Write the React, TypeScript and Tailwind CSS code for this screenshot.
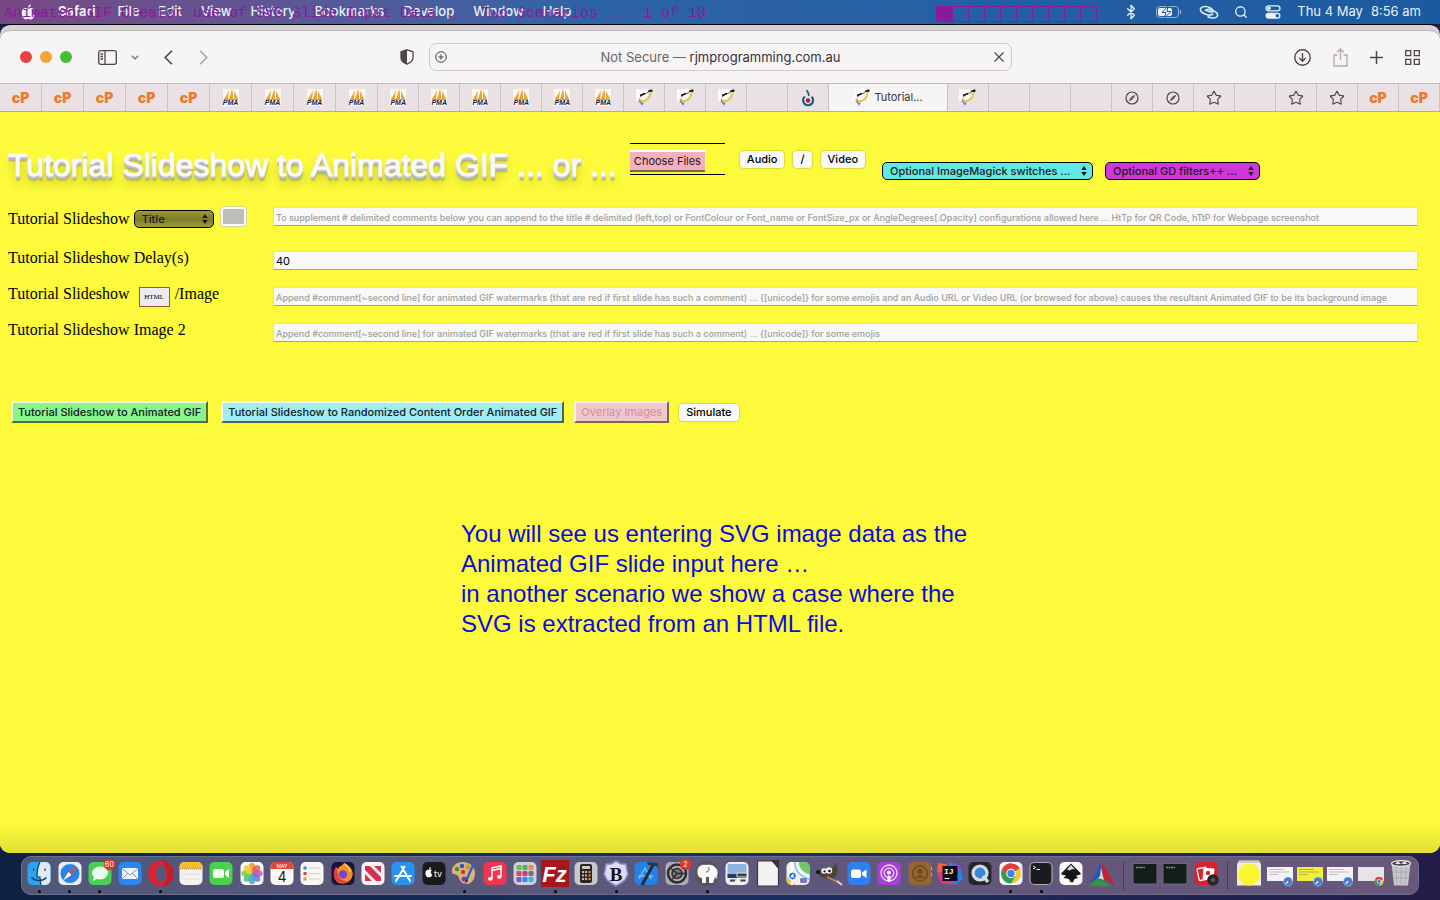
import { FC, ReactNode } from 'react'
import { Bluetooth, Search, Star } from 'lucide-react'

const menus = ['File', 'Edit', 'View', 'History', 'Bookmarks', 'Develop', 'Window', 'Help']

const leftTabs = [
  'cp', 'cp', 'cp', 'cp', 'cp', 'pma', 'pma', 'pma', 'pma', 'pma',
  'pma', 'pma', 'pma', 'pma', 'pma', 'goat', 'goat', 'goat', '', 'drop',
]
const rightTabs = ['goat', '', '', '', 'compass', 'compass', 'star', '', 'star', 'star', 'cp', 'cp']

const watermark = 'Append #comment[~second line] for animated GIF watermarks (that are red if first slide has such a comment) ... {[unicode]} for some emojis'

const GoatIcon = () => (
  <svg viewBox="0 0 17 17" className="size-[17px]">
    <path d="M0 0h12v7L7 12H0z" fill="#fcfafa" />
    <path d="M14.500 3c0 4-2 7-5 8.500-3 1.500-5 1-6.500-2" stroke="#e3c53a" strokeWidth="1.800" fill="none" />
    <path d="M4 8l4-3 4-1.500" stroke="#6d6468" strokeWidth="1" fill="none" />
    <path d="M4 6.500l5-2M12 2.500l3-1" stroke="#1b1616" strokeWidth="1.600" />
    <path d="M3 11.500l3 4 1-2" stroke="#8b6fc4" strokeWidth="1.300" fill="none" />
    <circle cx="15.300" cy="1.700" r="1.300" fill="#1b1616" />
  </svg>
)

const TabIcon: FC<{ kind: string }> = ({ kind }) => {
  if (kind === 'cp') return <span className="font-['Inter'] text-sm font-black text-[#ee7a2e]">cP</span>
  if (kind === 'pma')
    return (
      <span className="flex h-[17px] w-4 flex-col items-center bg-[#fbf8f4]">
        <svg viewBox="0 0 16 11" className="h-[11px] w-4 shrink-0">
          <path d="M6 1C5 4 3 7 1 10h4zM9 0C8 4 7 7 6 10h4C10 6 10 3 9 0z" fill="#f0a02c" />
          <path d="M11 2c2 3 3 6 4 8h-4z" fill="#d9b04a" />
          <path d="M1 10.500h14" stroke="#8c7a66" strokeWidth=".7" />
        </svg>
        <span className="font-['Liberation_Sans'] text-[7px] leading-[6px] font-bold text-[#1d1b3c] italic">PMA</span>
      </span>
    )
  if (kind === 'goat') return <GoatIcon />
  if (kind === 'drop')
    return (
      <svg viewBox="0 0 14 18" className="h-[18px] w-3.5">
        <path d="M6 1c-.5 2 3 3 1.500 6" fill="none" stroke="#22597f" strokeWidth="1.800" />
        <path d="M3.800 7.500a5 5 0 1 0 6.800.2" fill="none" stroke="#22597f" strokeWidth="2.200" />
        <circle cx="7" cy="11.500" r="2.200" fill="#a02232" />
      </svg>
    )
  if (kind === 'compass')
    return (
      <svg viewBox="0 0 14 14" className="size-3.5">
        <circle cx="7" cy="7" r="6" fill="none" stroke="#4d474b" strokeWidth="1.200" />
        <path d="M10.500 3.500L8 8l-4.500 2.500L6 6z" fill="#4d474b" />
        <circle cx="7" cy="7" r=".6" fill="#e9e1e4" />
      </svg>
    )
  if (kind === 'star') return <Star className="size-4 text-[#4d474b]" strokeWidth={1.7} />
  return null
}

const Tab: FC<{ kind: string; wide?: boolean }> = ({ kind, wide }) => (
  <div className={`flex min-w-0 items-center justify-center border-r border-[#c9c1c6] bg-[#e9e1e4] ${wide ? 'flex-[42]' : 'flex-[41]'}`}>
    <TabIcon kind={kind} />
  </div>
)

interface PickerProps {
  label: string
  option: string
  className: string
}

const Picker: FC<PickerProps> = ({ label, option, className }) => (
  <span className="relative inline-flex">
    <select aria-label={label} className={`h-[18px] appearance-none rounded-[5px] border border-black pl-[7px] font-['Inter'] text-[11px] leading-4 font-medium text-[#201c20] ${className}`}>
      <option>{option}</option>
    </select>
    <svg viewBox="0 0 6 10" className="pointer-events-none absolute top-1 right-1.5 h-2.5 w-1.5">
      <path d="M3 0l2.700 4H.3zM3 10L.3 6h5.400z" fill="#16121a" />
    </svg>
  </span>
)

const PlainButton: FC<{ children: ReactNode }> = ({ children }) => (
  <button className="h-[17px] rounded-[4px] bg-[#faf9f9] px-[7px] font-['Inter'] text-[11px] leading-[17px] font-medium text-black shadow-[0_0_1px_1px_rgba(120,120,60,0.25)]">
    {children}
  </button>
)

interface RowProps {
  id: string
  label: ReactNode
  placeholder?: string
  value?: string
  first?: boolean
}

const Row: FC<RowProps> = ({ id, label, placeholder, value, first }) => (
  <div className={`flex items-start ${first ? 'h-10' : 'h-9'}`}>
    <div className={`flex w-[265px] shrink-0 items-center font-['Liberation_Serif'] text-base text-black ${first ? 'h-[23px]' : 'h-[22px]'}`}>
      {label}
    </div>
    <input
      id={id}
      aria-label={id}
      defaultValue={value}
      placeholder={placeholder}
      className={`h-[19px] min-w-0 flex-1 border border-t-[#e6e4a8] border-r-[#deddb4] border-b-[#a9a878] border-l-[#deddb4] bg-[#f8f8f7] px-0.5 font-['Inter'] text-[11px] text-black placeholder:text-[9px] placeholder:font-medium placeholder:text-[#a0a0a0] ${first ? '' : 'mt-1'}`}
    />
  </div>
)

const Tile: FC<{ fill: string; children?: ReactNode }> = ({ fill, children }) => (
  <>
    <rect x="3.500" y="3" width="23" height="23" rx="5" fill={fill} />
    {children}
  </>
)

const ChromeMark: FC<{ x: number; y: number; s: number }> = ({ x, y, s }) => (
  <g transform={`translate(${x} ${y}) scale(${s})`}>
    <circle r="9" fill="#f6c433" />
    <path d="M0 0L-7.800-4.500A9 9 0 0 1 7.800-4.500z" fill="#dd4437" />
    <path d="M0-4.500h8L7.800-4.500A9 9 0 0 0-7.800-4.500L-4 2z" fill="#dd4437" />
    <path d="M-7.800-4.500A9 9 0 0 0 0 9L4 2.200-4 2z" fill="#2f9e55" />
    <circle r="4.300" fill="#fff" />
    <circle r="3.300" fill="#3f7fe8" />
  </g>
)

const SafariMark: FC<{ x: number; y: number; r: number }> = ({ x, y, r }) => (
  <g transform={`translate(${x} ${y}) scale(${r / 10})`}>
    <circle r="10" fill="#2b83e3" stroke="#dfe8f2" strokeWidth="1" />
    <path d="M7-7L1.500 1.500-1.500-1.500z" fill="#ee4338" />
    <path d="M-7 7L1.500 1.500-1.500-1.500z" fill="#fff" />
  </g>
)

const Preview: FC<{ fill: string; lines?: string; children: ReactNode }> = ({ fill, lines, children }) => (
  <>
    <rect x="2" y="8" width="26" height="14" fill={fill} />
    {lines && <path d="M4 10.500h15M4 13h20M4 15.500h9" stroke={lines} strokeWidth=".8" />}
    {children}
  </>
)

interface DockItem {
  name: string
  art: ReactNode
  running?: boolean
}

const apps: DockItem[] = [
  {
    name: 'Finder',
    running: true,
    art: (
      <Tile fill="#2aa4f0">
        <path d="M16 3h5.500a5 5 0 0 1 5 5v13a5 5 0 0 1-5 5H17c-1-3-1-6-1-8h-3c0-6 1-11 3-15z" fill="#dfe9f3" />
        <path d="M9.500 9.500v2.500M21 9.500v2.500M7.500 18.500c4 4 11 4 15 0M16 3c-2 4-3 9-3 15h3c0 2 0 5 1 8" stroke="#17395f" strokeWidth="1.200" fill="none" />
      </Tile>
    ),
  },
  { name: 'Safari', running: true, art: <Tile fill="#edf0f3"><SafariMark x={15} y={14.5} r={10} /></Tile> },
  {
    name: 'Messages',
    running: true,
    art: (
      <Tile fill="#49cf51">
        <ellipse cx="15" cy="14" rx="8" ry="6.500" fill="#eefaee" />
        <path d="M9 17l-1 5 6-3z" fill="#eefaee" />
        <circle cx="24.500" cy="5.500" r="5.500" fill="#e2342f" />
        <text x="24.500" y="8" fontSize="7" textAnchor="middle" fill="#fff" fontFamily="Inter">60</text>
      </Tile>
    ),
  },
  {
    name: 'Mail',
    art: (
      <Tile fill="#2c86ef">
        <rect x="7" y="9" width="16" height="11" rx="1.500" fill="#f1f6fc" />
        <path d="M7.500 10l7.500 6 7.500-6M7.500 19.500l5-5M22.500 19.500l-5-5" stroke="#7c93ad" fill="none" />
      </Tile>
    ),
  },
  {
    name: 'Opera',
    running: true,
    art: (
      <>
        <circle cx="15" cy="14.500" r="13" fill="#dd2330" />
        <path d="M15 1.500a13 13 0 0 1 0 26c8-5 8-21 0-26" fill="#a81c29" opacity=".6" />
        <ellipse cx="15" cy="14.500" rx="5" ry="9" fill="#55587d" />
      </>
    ),
  },
  {
    name: 'Notes',
    art: (
      <Tile fill="#f4f1ee">
        <path d="M3.500 10V8a5 5 0 0 1 5-5h13a5 5 0 0 1 5 5v2z" fill="#f3bd2e" />
        <path d="M4 10h22" stroke="#9c8a66" strokeDasharray="1 1" />
        <path d="M6 15h18M6 20h18" stroke="#d8d4d0" strokeWidth=".7" />
      </Tile>
    ),
  },
  {
    name: 'FaceTime',
    art: (
      <Tile fill="#4bd14c">
        <rect x="7" y="10" width="11" height="9" rx="2.500" fill="#f3fbf3" />
        <path d="M19 13l4-3v9l-4-3z" fill="#f3fbf3" />
      </Tile>
    ),
  },
  {
    name: 'Photos',
    art: (
      <Tile fill="#f8f7f6">
        {['#f2922c', '#f0574a', '#c458b4', '#7a6bd6', '#4a9be0', '#43bfa0', '#7fca4b', '#f2cf35'].map((c, i) => (
          <ellipse key={c} cx="15" cy="9" rx="3.600" ry="5.200" fill={c} opacity=".85" transform={`rotate(${i * 45} 15 14.5)`} />
        ))}
      </Tile>
    ),
  },
  {
    name: 'Calendar',
    art: (
      <Tile fill="#f9f8f7">
        <path d="M3.500 10V8a5 5 0 0 1 5-5h13a5 5 0 0 1 5 5v2z" fill="#e0443c" />
        <text x="15" y="8.500" fontSize="5" textAnchor="middle" fill="#fff" fontFamily="Inter">MAY</text>
        <text x="15" y="23" fontSize="14" textAnchor="middle" fill="#222" fontFamily="Inter">4</text>
      </Tile>
    ),
  },
  {
    name: 'Reminders',
    art: (
      <Tile fill="#f8f7f6">
        <circle cx="8" cy="9" r="1.800" fill="#3b82e6" />
        <circle cx="8" cy="14.500" r="1.800" fill="#e0443c" />
        <circle cx="8" cy="20" r="1.800" fill="#ef9a34" />
        <path d="M11.500 9h12M11.500 14.500h12M11.500 20h12" stroke="#c9c5c5" strokeWidth=".8" />
      </Tile>
    ),
  },
  {
    name: 'Firefox',
    art: (
      <Tile fill="#1d1238">
        <path d="M16 4c3 2 4 4 4 6 2-1 1-3 1-3 4 4 5 9 2 13-4 6-13 6-16 0C5 16 6 11 8 8l2 2c1-3 4-3 6-6z" fill="#f98b23" />
        <path d="M8 8c-2 4-3 9 0 13 3 3 9 4 13 1-6 1-11-2-11-7z" fill="#e8344f" />
        <path d="M16 4c1 4 5 4 5 9l2-1c-1-3-2-6-7-8z" fill="#ffdb43" />
        <circle cx="15" cy="15.500" r="4.200" fill="#7547d9" />
      </Tile>
    ),
  },
  {
    name: 'News',
    art: (
      <Tile fill="#f8f7f6">
        <path d="M7 7h5l11 11v4h-5L7 11zM7 15v7h7zM23 14V7h-7z" fill="#dd2f4b" />
      </Tile>
    ),
  },
  {
    name: 'App Store',
    art: (
      <Tile fill="#2693f1">
        <path d="M16.500 7.500L10 19M13.500 7.500l7 12M7 17h16M9 20l-1 2M21 20l1 2" stroke="#fff" strokeWidth="1.900" strokeLinecap="round" />
      </Tile>
    ),
  },
  {
    name: 'TV',
    art: (
      <Tile fill="#1a1a1c">
        <path d="M10 11c1.500-1 3 0 3 0-2 1.500-1 4 .3 4.500-1 3-2 3-3.300 2.500-1.300.5-2.300.5-3.300-2-1-3 .8-6 3.300-5zM10 10.500c0-1.500.8-2.300 1.900-2.500 0 1.500-.8 2.300-1.900 2.500z" fill="#fff" />
        <text x="19" y="18" fontSize="9" textAnchor="middle" fill="#fff" fontFamily="Inter">tv</text>
      </Tile>
    ),
  },
  {
    name: 'Paintbrush',
    running: true,
    art: (
      <>
        <path d="M14 3C7 3 2 8 3 13c1 4 4 1 6 4 2 4 3 8 8 8 6 0 9-5 9-11S21 3 14 3z" fill="#dcb27c" />
        <circle cx="8" cy="10" r="2.200" fill="#3f8f3d" />
        <circle cx="13" cy="7" r="2.200" fill="#2b54c0" />
        <circle cx="19" cy="8" r="2.200" fill="#b0a032" />
        <circle cx="14" cy="13" r="2.200" fill="#c83c30" />
        <circle cx="15" cy="20" r="2.500" fill="#7b3fa6" />
        <path d="M25 4l-8 18" stroke="#2760bd" strokeWidth="2.300" />
        <path d="M18 20l-3 5 4-3z" fill="#2a1d18" />
      </>
    ),
  },
  {
    name: 'Music',
    art: (
      <Tile fill="#f43350">
        <path d="M12 19.500V9l9-2v10.500M12 11.500l9-2" stroke="#fff" strokeWidth="1.600" fill="none" />
        <ellipse cx="10.300" cy="19.800" rx="2.300" ry="1.900" fill="#fff" />
        <ellipse cx="19.300" cy="17.800" rx="2.300" ry="1.900" fill="#fff" />
      </Tile>
    ),
  },
  {
    name: 'Launchpad',
    art: (
      <Tile fill="#d0d1d8">
        {['#6dc04f', '#57b06a', '#ef8d33', '#dd4a4d', '#c43e7a', '#6d737f', '#7d52d8', '#3a87e0', '#40b0e6'].map((c, i) => (
          <rect key={c} x={6.5 + (i % 3) * 6} y={6 + Math.floor(i / 3) * 6} width="5" height="5" rx="1.200" fill={c} />
        ))}
      </Tile>
    ),
  },
  {
    name: 'FileZilla',
    running: true,
    art: (
      <>
        <rect x="1" y="1" width="28" height="27" fill="#a6161d" />
        <text x="14.500" y="22.500" fontSize="22" fontWeight="800" fontStyle="italic" textAnchor="middle" fill="#fff" fontFamily="Liberation Sans">Fz</text>
      </>
    ),
  },
  {
    name: 'Calculator',
    art: (
      <Tile fill="#c7c8cb">
        <rect x="9" y="5" width="12" height="19" rx="2" fill="#2a2523" />
        <rect x="11" y="7" width="8" height="3" fill="#cfc9c0" />
        <path d="M11 13h2M14 13h2M11 16.500h2M14 16.500h2M11 20h2M14 20h2" stroke="#bdb6b0" strokeWidth="2" />
        <path d="M17.500 13h2M17.500 16.500h2M17.500 20h2" stroke="#ee9430" strokeWidth="2" />
      </Tile>
    ),
  },
  {
    name: 'BBEdit',
    running: true,
    art: (
      <>
        <path d="M15 2l5 3h5l1 6 1 4-3 6-4 3-5 3-5-3-4-3-3-6 1-4 1-6h5z" fill="#dcdcf2" stroke="#8485c8" strokeWidth="1.600" />
        <text x="15" y="21.500" fontSize="19" fontWeight="700" textAnchor="middle" fill="#15131c" fontFamily="Liberation Serif">B</text>
      </>
    ),
  },
  {
    name: 'Xcode',
    art: (
      <Tile fill="#2183ea">
        <path d="M8 20l6-11 6 11M7 17h15" stroke="#78c0fa" strokeWidth="1.500" fill="none" />
        <path d="M22 6L11 26" stroke="#262a31" strokeWidth="3" />
        <path d="M16 3l10 1 2 5-3-2-8-1z" fill="#30343c" />
      </Tile>
    ),
  },
  {
    name: 'System Settings',
    art: (
      <Tile fill="#adacae">
        <circle cx="15" cy="14.500" r="9" fill="none" stroke="#2e2d30" strokeWidth="2.500" />
        <circle cx="15" cy="14.500" r="5" fill="#77767a" stroke="#2e2d30" strokeWidth="1.600" />
        <path d="M15 14.500l-6-5M15 14.500h8M15 14.500l-5 6" stroke="#2e2d30" strokeWidth="1.500" />
        <circle cx="23.500" cy="5.500" r="5.500" fill="#e2342f" />
        <text x="23.500" y="8" fontSize="7" textAnchor="middle" fill="#fff" fontFamily="Inter">2</text>
      </Tile>
    ),
  },
  {
    name: 'MAMP',
    running: true,
    art: (
      <>
        <circle cx="15" cy="14.500" r="12.500" fill="#57555c" />
        <path d="M5.500 12c0-5 5-7 8-6 5-1 9 0 11 4 2 3 1 6 0 8l1 1c-1 1-2 0-2.500-1L21 24h-4v-6h-3v6h-4v-5c-3 0-5-3-4.500-7z" fill="#faf9f8" />
        <path d="M16 8c2 2 1 5-2 5" stroke="#57555c" fill="none" />
      </>
    ),
  },
  {
    name: 'Scanner',
    art: (
      <Tile fill="#eef2f6">
        <rect x="5.500" y="5" width="19" height="12" rx="1.500" fill="#8fb4e0" />
        <path d="M5.500 15h19v4h-19z" fill="#1d3d66" />
        <path d="M15 14h10v4H15zM8 20h6l-1 3H7zM18 20h6v3h-6z" fill="#3c4048" stroke="#dfe3e8" />
      </Tile>
    ),
  },
  {
    name: 'LibreOffice',
    art: (
      <>
        <path d="M4.500 2h15l6 7v18h-21z" fill="#f3f2f1" stroke="#3a3a3e" strokeWidth="1.200" />
        <path d="M18 1h8v9z" fill="#35353c" />
      </>
    ),
  },
  {
    name: 'Maps',
    art: (
      <Tile fill="#f2efe6">
        <path d="M16 3h6a5 5 0 0 1 4.500 4v8C20 14 16 9 16 3z" fill="#6ccb64" />
        <path d="M3.500 17l9 9h-4a5 5 0 0 1-5-5z" fill="#f5bf3e" />
        <path d="M13 3c0 9 6 13 13.500 15M9 3v23" stroke="#fff" strokeWidth="2.500" fill="none" />
        <path d="M12 3c0 8 5 14 14 17" stroke="#74c4ee" strokeWidth="1.500" fill="none" />
        <circle cx="9.500" cy="17" r="4" fill="#2f7ee8" stroke="#fff" />
        <path d="M9.500 14.500l2 4.500-2-1-2 1z" fill="#fff" />
        <rect x="17" y="19" width="7" height="5" rx="1.500" fill="#7b76c4" />
      </Tile>
    ),
  },
  {
    name: 'GIMP',
    art: (
      <>
        <path d="M4 13c2-3 5-3 8-2 4-1 7-2 10-7 2 4 2 9 0 13-3 4-8 4-11 2-3 0-7-3-7-6z" fill="#4b443d" />
        <circle cx="10" cy="12" r="2.700" fill="#f3f1ee" />
        <circle cx="15" cy="11.500" r="3.200" fill="#f3f1ee" />
        <circle cx="10.500" cy="12.300" r="1.100" fill="#111" />
        <circle cx="15.500" cy="12" r="1.300" fill="#111" />
        <circle cx="4" cy="13" r="2" fill="#15130f" />
        <path d="M13 18l11 5" stroke="#c98b4a" strokeWidth="1.500" />
        <path d="M23 22l5 4" stroke="#dad5cf" strokeWidth="2" />
      </>
    ),
  },
  {
    name: 'Zoom',
    art: (
      <Tile fill="#2f80ee">
        <rect x="7" y="10.500" width="10" height="8.500" rx="2" fill="#fff" />
        <path d="M18 13.500l4.500-3v8.500L18 16z" fill="#fff" />
      </Tile>
    ),
  },
  {
    name: 'Podcasts',
    art: (
      <Tile fill="#a840d6">
        <circle cx="15" cy="14" r="8" fill="none" stroke="#efdcf8" strokeWidth="1.300" />
        <circle cx="15" cy="14" r="4.800" fill="none" stroke="#efdcf8" strokeWidth="1.200" />
        <circle cx="15" cy="13.500" r="2" fill="#fff" />
        <rect x="13.500" y="16.500" width="3" height="6.500" rx="1.400" fill="#fff" />
      </Tile>
    ),
  },
  {
    name: 'Contacts',
    art: (
      <Tile fill="#95672f">
        <circle cx="15" cy="14.500" r="7.500" fill="none" stroke="#6f4a22" strokeWidth="1.400" />
        <circle cx="15" cy="12.500" r="2.500" fill="#6f4a22" />
        <path d="M10.500 19c1-4 8-4 9 0z" fill="#6f4a22" />
        <path d="M26.500 8v3M26.500 14v3" stroke="#b7b83c" />
      </Tile>
    ),
  },
  {
    name: 'IntelliJ IDEA',
    art: (
      <>
        <path d="M3 4l9 1-2 10-8-2z" fill="#f0663a" />
        <path d="M14 3l11 4 3 13-8 6-8-7z" fill="#2d7ff0" />
        <path d="M2 14l8-2 8 14-12-2z" fill="#e8358c" />
        <path d="M19 4l7 4-3 5-6-4z" fill="#8a4ae4" />
        <rect x="7.500" y="7" width="15" height="15" fill="#0d0d10" />
        <text x="9" y="14.500" fontSize="8" fontWeight="700" fill="#fff" fontFamily="Liberation Mono">IJ</text>
        <path d="M9.500 19.500h5" stroke="#fff" strokeWidth="1.100" />
      </>
    ),
  },
  {
    name: 'QuickTime',
    art: (
      <Tile fill="#26272b">
        <circle cx="15" cy="14" r="7" fill="#3887dd" stroke="#d5dbe2" strokeWidth="3.200" />
        <path d="M18 17l5 6" stroke="#d5dbe2" strokeWidth="3.500" />
      </Tile>
    ),
  },
  { name: 'Chrome', running: true, art: <Tile fill="#f8f7f6"><ChromeMark x={15} y={14.5} s={1.1} /></Tile> },
  {
    name: 'Terminal',
    running: true,
    art: (
      <>
        <rect x="4" y="3.500" width="22" height="22" rx="4.500" fill="#1a1b1e" stroke="#a9a9ae" strokeWidth="1.200" />
        <path d="M7 7l2.500 1.500L7 10M10.500 10.500h3.500" stroke="#f1f1f1" strokeWidth="1" fill="none" />
      </>
    ),
  },
  {
    name: 'Inkscape',
    art: (
      <Tile fill="#fbfaf9">
        <path d="M15 4.500l9.500 9.500c1 2-2 2-4 2.500-1 1 2 1.500 1 3-2 0-3 0-4 2.500-1 3-4 1-4-1 0-2-5-1-6-2.500 1-1 3-1 2-2-2-.5-5-.5-4-2.500z" fill="#15151a" />
        <path d="M15 6l4 4.500-3-.5-2 1.500-3-1z" fill="#dedee4" />
      </Tile>
    ),
  },
  {
    name: 'CMake',
    art: (
      <>
        <path d="M14.500 2L2 26l11-9z" fill="#2458b8" />
        <path d="M14.500 2L28 27l-12-8z" fill="#c42230" />
        <path d="M2 26.500l9-7.500 15 8.500z" fill="#2c9a3c" />
        <path d="M14 9l-1 8-2 2 6 2z" fill="#d4d6dc" />
      </>
    ),
  },
]

const ShellArt = () => (
  <>
    <rect x="3" y="4.500" width="24" height="20.500" fill="#151d1b" stroke="#6b6b76" />
    <path d="M6 8.500h9" stroke="#6e9c56" strokeWidth="1.400" strokeDasharray="2 .5" />
  </>
)

const recent: DockItem[] = [
  { name: 'Shell 1', art: <ShellArt /> },
  { name: 'Shell 2', art: <ShellArt /> },
  {
    name: 'Photo Booth',
    art: (
      <Tile fill="#d8232b">
        <rect x="7" y="9" width="9" height="12" rx="1" fill="none" stroke="#fff" strokeWidth="1.300" transform="rotate(-12 11 15)" />
        <rect x="12" y="9" width="11" height="12" rx="1" fill="#fff" transform="rotate(5 17 15)" />
        <circle cx="17" cy="14" r="2.200" fill="#d8232b" />
        <circle cx="22" cy="21" r="5.800" fill="#26252b" />
        <circle cx="22" cy="21" r="2.300" fill="#55545e" />
      </Tile>
    ),
  },
]

const minimized: DockItem[] = [
  {
    name: 'Downloads',
    art: (
      <>
        <path d="M5 1.500h20l2 4v21H3v-21z" fill="#ededea" />
        <path d="M5 3h20" stroke="#a8a7ac" />
        <circle cx="15" cy="15.500" r="11" fill="#faf633" />
      </>
    ),
  },
  { name: 'Window 1', art: <Preview fill="#f4f3f4" lines="#b4b3b8"><SafariMark x={23} y={22.5} r={4.5} /></Preview> },
  { name: 'Window 2', art: <Preview fill="#f2ee3c" lines="#aaa63a"><SafariMark x={23} y={22.5} r={4.5} /></Preview> },
  { name: 'Window 3', art: <Preview fill="#f4f3f4" lines="#b4b3b8"><SafariMark x={23} y={22.5} r={4.5} /></Preview> },
  { name: 'Window 4', art: <Preview fill="#e8e3e8"><ChromeMark x={23} y={22.5} s={0.5} /></Preview> },
  {
    name: 'Trash',
    art: (
      <>
        <path d="M5.500 4h19L22 26.500H8z" fill="#c6c7ca" />
        <path d="M10 7l1 18M15 7v18M20 7l-1 18M7 13h16M8 19h14" stroke="#a3a4aa" strokeWidth=".8" />
        <ellipse cx="15" cy="4.500" rx="9.500" ry="2.800" fill="#47474c" stroke="#e8e8ea" strokeWidth="1.200" />
        <path d="M9 5l3-3 3 3 4-3 2 3z" fill="#e8e8ea" />
      </>
    ),
  },
]

const DockSlot: FC<{ item: DockItem }> = ({ item }) => (
  <div className="flex min-w-0 flex-1 flex-col items-center gap-px pt-0.5">
    <svg viewBox="0 0 30 30" className="h-[30px] w-[30px] overflow-visible" role="img" aria-label={item.name}>
      {item.art}
    </svg>
    {item.running && <span className="size-[3px] rounded-full bg-black" />}
  </div>
)

const DockDivider = () => (
  <div className="flex w-[13px] shrink-0 justify-center py-1">
    <span className="w-px bg-[#3f3d5c]" />
  </div>
)

const MenuBar = () => (
  <div className="relative flex h-6 items-center justify-between bg-linear-to-r from-[#774884] via-[#2d64a6] via-40% to-[#1c5aa0] font-['Inter'] text-[13px] font-medium text-[#e9f1f8]">
    <nav className="flex items-center gap-[19px] pl-[21px]">
      <svg viewBox="0 0 14 16" className="mr-1 h-4 w-3.5">
        <path d="M10 4c1.500 0 2.500.8 3 1.600-2.400 1.500-2 4.800.5 5.800C12.500 14 11.300 15.500 10 15.500c-1 0-1.500-.6-2.700-.6s-1.700.6-2.600.6C3 15.500.7 12 .7 8.800.7 5.700 2.600 4 4.500 4c1.200 0 2 .8 2.800.8S9 4 10 4zM9.800.5c.2 1.500-1 3.200-2.700 3.100C7 2 8.300.7 9.800.5z" fill="#eff4f8" />
      </svg>
      <span className="mr-[3px] font-bold">Safari</span>
      {menus.map((m) => (
        <a key={m} href="#">{m}</a>
      ))}
    </nav>
    <div className="flex items-center pr-[19px]">
      <Bluetooth className="mr-[17px] size-4" strokeWidth={2} />
      <svg viewBox="0 0 26 12" className="mr-[17px] h-3 w-[26px]">
        <rect x=".5" y=".5" width="22" height="11" rx="3.500" fill="none" stroke="#8fb2d2" />
        <rect x="2" y="2" width="14" height="8" rx="2" fill="#e9f1f8" />
        <path d="M12 0L6 6.500h4L8.500 12l6.500-6.500H11z" fill="#e9f1f8" stroke="#23599b" />
        <path d="M24.500 4v4" stroke="#8fb2d2" strokeWidth="1.300" />
      </svg>
      <svg viewBox="0 0 20 14" className="mr-[15px] h-3.5 w-5" fill="none" stroke="#dcebf5" strokeWidth="1.600">
        <path d="M14 8.500C13 10 10.500 10.500 7.500 9.500 2 8 .5 5 2 3s6-2 9.500 0c3 1.600 3 4 1 4-1.500 0-4-.8-5-2" />
        <path d="M6 6c1-1.500 3.500-2 6.500-1C18 6.500 19.500 9.500 18 11.500s-6 2-9.500 0" />
      </svg>
      <Search className="mr-[17px] size-3.5" strokeWidth={2.2} />
      <svg viewBox="0 0 16 14" className="mr-4 h-3.5 w-4">
        <rect x="1" y=".8" width="14" height="5" rx="2.500" fill="none" stroke="#e9f1f8" strokeWidth="1.300" />
        <circle cx="4" cy="3.300" r="1.800" fill="#e9f1f8" />
        <rect x=".5" y="7.700" width="15" height="6" rx="3" fill="#e9f1f8" />
        <circle cx="12.300" cy="10.700" r="1.700" fill="#23599b" />
      </svg>
      <span className="mr-2 font-normal">Thu 4 May</span>
      <span className="font-normal">8:56 am</span>
    </div>
    {/* slide caption and progress boxes stamped over the menu bar */}
    <p className="pointer-events-none absolute top-1 left-1 font-['Liberation_Mono'] text-[15px] leading-5 font-normal whitespace-pre text-[#8a1a9c]">
      Animated GIF Creator use of SVG Slide Input Data ... Two Scenarios ... 1 of 10
    </p>
    <div className="pointer-events-none absolute top-1.5 left-[65%] flex border-l border-[#8a1a9c]">
      {Array.from({ length: 10 }, (_, i) => (
        <span key={i} className={`h-4 w-4 border border-l-0 border-[#8a1a9c] ${i === 0 ? 'bg-[#8a1a9c]' : ''}`} />
      ))}
    </div>
  </div>
)

const Toolbar = () => (
  <div className="flex h-[53px] items-center rounded-t-[10px] border-t border-[#bdb7ba] bg-[#f6f4f4] pr-5 pl-5 text-[#4d474b]">
    <div className="flex flex-1 items-center">
      <div className="flex gap-2">
        <button aria-label="Close" className="size-3 rounded-full bg-[#ea4143]" />
        <button aria-label="Minimize" className="size-3 rounded-full bg-[#f0a638]" />
        <button aria-label="Zoom" className="size-3 rounded-full bg-[#45bd35]" />
      </div>
      <button aria-label="Sidebar" className="ml-[26px]">
        <svg viewBox="0 0 19 15" className="h-[15px] w-[19px]" fill="none" stroke="currentColor" strokeWidth="1.300">
          <rect x=".7" y=".7" width="17.600" height="13.600" rx="2" />
          <path d="M7 1v13M2.500 4h2.500M2.500 6.500h2.500M2.500 9h2.500" />
        </svg>
      </button>
      <button aria-label="Tab groups" className="ml-[14px]">
        <svg viewBox="0 0 8 5" className="h-[5px] w-2" fill="none" stroke="#7d777b" strokeWidth="1.400">
          <path d="M.8.8L4 4 7.200.8" />
        </svg>
      </button>
      <button aria-label="Back" className="ml-[25px]">
        <svg viewBox="0 0 9 15" className="h-[15px] w-[9px]" fill="none" stroke="currentColor" strokeWidth="1.600">
          <path d="M8 .8L1.200 7.500 8 14.200" />
        </svg>
      </button>
      <button aria-label="Forward" className="ml-[26px]">
        <svg viewBox="0 0 9 15" className="h-[15px] w-[9px]" fill="none" stroke="#aaa4a8" strokeWidth="1.600">
          <path d="M1 .8l6.800 6.700L1 14.200" />
        </svg>
      </button>
      <button aria-label="Privacy report" className="mr-[15px] ml-auto">
        <svg viewBox="0 0 14 16" className="h-4 w-3.5">
          <path d="M7 .8l6 2v6c0 3-3 5.200-6 6.400C4 14 1 11.800 1 8.800v-6z" fill="none" stroke="currentColor" strokeWidth="1.300" />
          <path d="M7 .8v14.400C4 14 1 11.800 1 8.800v-6z" fill="currentColor" />
        </svg>
      </button>
    </div>
    <div className="flex h-7 w-[583px] items-center justify-between rounded-[7px] border border-[#cfc8cc] px-[5px]">
      <svg viewBox="0 0 12 12" className="size-3" fill="none" stroke="currentColor">
        <circle cx="6" cy="6" r="5.300" />
        <path d="M6 3.200v5.600M3.200 6h5.600" />
      </svg>
      <p className="pt-0.5 font-['Inter'] text-[13px] text-[#37313a]">
        <span className="text-[#6a6468]">Not Secure — </span>rjmprogramming.com.au
      </p>
      <svg viewBox="0 0 10 10" className="mr-px size-2.5" fill="none" stroke="currentColor" strokeWidth="1.200">
        <path d="M.5.5l9 9M9.500.5l-9 9" />
      </svg>
    </div>
    <div className="flex flex-1 items-center justify-end gap-[22px]">
      <svg viewBox="0 0 17 17" className="size-[17px]" fill="none" stroke="currentColor" strokeWidth="1.400">
        <circle cx="8.500" cy="8.500" r="7.700" />
        <path d="M8.500 4v8M5.300 9l3.200 3.200L11.700 9" />
      </svg>
      <svg viewBox="0 0 15 19" className="h-[19px] w-[15px]" fill="none" stroke="#b0aaae" strokeWidth="1.300">
        <path d="M4.500 7H1v11h13V7h-3.500M7.500 12V1.200M4.300 4.200l3.200-3.200 3.200 3.200" />
      </svg>
      <svg viewBox="0 0 13 13" className="size-[13px]" fill="none" stroke="currentColor" strokeWidth="1.500">
        <path d="M6.500 0v13M0 6.500h13" />
      </svg>
      <svg viewBox="0 0 15 15" className="size-[15px]" fill="none" stroke="currentColor" strokeWidth="1.300">
        <path d="M.7.7h5v5h-5zM9.300.7h5v5h-5zM.7 9.300h5v5h-5zM9.300 9.300h5v5h-5z" />
      </svg>
    </div>
  </div>
)

export default function App() {
  return (
    <div className="flex min-h-screen flex-col bg-linear-to-r from-[#0f2140] via-[#18305f] to-[#221c48]">
      <MenuBar />
      <div className="flex flex-1 flex-col overflow-hidden rounded-t-[10px] rounded-b-[10px] border-t border-black bg-[#d6d1d4] pt-[5px]">
        <Toolbar />
        <div className="flex h-[29px] border-t border-b border-t-[#c3bbc0] border-b-[#b9b36a]">
          {leftTabs.map((kind, i) => (
            <Tab key={i} kind={kind} wide={i < 9} />
          ))}
          <div className="flex min-w-0 flex-[120] items-center justify-center gap-1 border-r border-[#c9c1c6] bg-[#f6f4f4] font-['Inter'] text-[11px] text-[#37313a]">
            <GoatIcon />
            Tutorial...
          </div>
          {rightTabs.map((kind, i) => (
            <Tab key={i} kind={kind} />
          ))}
        </div>

        <main className="flex-1 bg-[#fcfa3a] bg-linear-to-b from-transparent from-96% to-[#e3df34] pr-[22px] pl-2">
          <header className="flex h-[95px] items-start pt-[31px]">
            <h1 className="font-['Liberation_Sans'] text-[32px] leading-11 whitespace-nowrap text-[#fafafa] [-webkit-text-stroke:1px_#fafafa] [text-shadow:0_1px_0_#ccc,0_2px_0_#c4c4c4,0_3px_0_#bbb,0_4px_0_#aaa,0_5px_2px_rgba(0,0,0,0.2),0_8px_10px_rgba(0,0,0,0.25)]">
              Tutorial Slideshow to Animated GIF ... or ...
            </h1>
            <div className="ml-[13px] flex h-8 w-[95px] shrink-0 items-center border-y border-black">
              <label className="mt-1 h-[22px] border-t-2 border-b-2 border-t-white border-b-[#7a6a4c] bg-[#f3b0bd] px-1 font-['Inter'] text-[11px] leading-[18px] whitespace-nowrap text-[#2a161c]">
                Choose Files
                <input type="file" multiple className="hidden" />
              </label>
            </div>
            <div className="ml-[15px] flex h-8 items-center gap-[9px]">
              <PlainButton>Audio</PlainButton>
              <PlainButton>/</PlainButton>
              <PlainButton>Video</PlainButton>
            </div>
            <div className="mt-[19px] ml-[17px] flex gap-3">
              <Picker label="ImageMagick switches" option="Optional ImageMagick switches ..." className="w-[211px] bg-[#5fe9e4]" />
              <Picker label="GD filters" option="Optional GD filters++ ..." className="w-[155px] bg-[#cf36dc]" />
            </div>
          </header>

          <Row
            first
            id="title"
            placeholder="To supplement # delimited comments below you can append to the title # delimited (left,top) or FontColour or Font_name or FontSize_px or AngleDegrees[.Opacity] configurations allowed here ... HtTp for QR Code, hTtP for Webpage screenshot"
            label={
              <>
                <label htmlFor="title" className="mr-1">Tutorial Slideshow</label>
                <Picker label="Field" option="Title" className="w-20 bg-linear-to-b from-[#9a9a3a] via-[#7c7c26] to-[#9c9c38]" />
                <input
                  type="color"
                  aria-label="Colour"
                  defaultValue="#bfbfba"
                  className="mb-1 ml-1.5 h-[21px] w-[27px] appearance-none rounded-[4px] border border-[#d8d7a0] bg-[#f8f8f7] p-0.5 [&::-webkit-color-swatch]:border-0 [&::-webkit-color-swatch-wrapper]:p-0"
                />
              </>
            }
          />
          <Row id="delay" value="40" label={<label htmlFor="delay">Tutorial Slideshow Delay(s)</label>} />
          <Row
            id="image1"
            placeholder={watermark + ' and an Audio URL or Video URL (or browsed for above) causes the resultant Animated GIF to be its background image'}
            label={
              <>
                <label htmlFor="image1">Tutorial Slideshow</label>
                <button className="mt-1.5 mr-[5px] ml-[9px] h-5 w-[31px] border border-[#a5542c] bg-[#ececf0] text-[7px] leading-none">HTML</button>
                <span>/Image</span>
              </>
            }
          />
          <Row id="image2" placeholder={watermark} label={<label htmlFor="image2">Tutorial Slideshow Image 2</label>} />

          <div className="mt-[46px] flex items-center pl-[3px] font-['Inter'] text-[11px] font-medium text-[#10202a]">
            <button className="h-[22px] border-2 border-t-[#f4fbe0] border-r-[#5d6a35] border-b-[#5d6a35] border-l-[#f4fbe0] bg-[#88f58b] px-[5px] leading-[18px]">
              Tutorial Slideshow to Animated GIF
            </button>
            <button className="ml-[13px] h-[22px] border-2 border-t-[#f4fbf0] border-r-[#55605a] border-b-[#55605a] border-l-[#f4fbf0] bg-[#a0edf0] px-[5px] leading-[18px]">
              Tutorial Slideshow to Randomized Content Order Animated GIF
            </button>
            <button disabled className="mr-[10px] ml-[10px] h-[22px] border-2 border-t-[#fbf4e0] border-r-[#7a6a4c] border-b-[#7a6a4c] border-l-[#fbf4e0] bg-[#f0c8cc] px-[5px] leading-[18px] font-normal text-[#cf8f9c]">
              Overlay Images
            </button>
            <PlainButton>Simulate</PlainButton>
          </div>

          <p className="mx-auto mt-24 w-[504px] font-['Liberation_Sans'] text-2xl leading-[30px] whitespace-nowrap text-[#0b0be0]">
            You will see us entering SVG image data as the
            <br />
            Animated GIF slide input here …
            <br />
            in another scenario we show a case where the
            <br />
            SVG is extracted from an HTML file.
          </p>
        </main>
      </div>

      <footer className="px-[21px] pt-[3px] pb-[5px]">
        <div className="flex h-[39px] rounded-[10px] border border-[#6d6f90] bg-linear-to-r from-[#50587a] to-[#6a577c] px-0.5">
          {apps.map((item) => <DockSlot key={item.name} item={item} />)}
          <DockDivider />
          {recent.map((item) => <DockSlot key={item.name} item={item} />)}
          <DockDivider />
          {minimized.map((item) => <DockSlot key={item.name} item={item} />)}
        </div>
      </footer>
    </div>
  )
}
